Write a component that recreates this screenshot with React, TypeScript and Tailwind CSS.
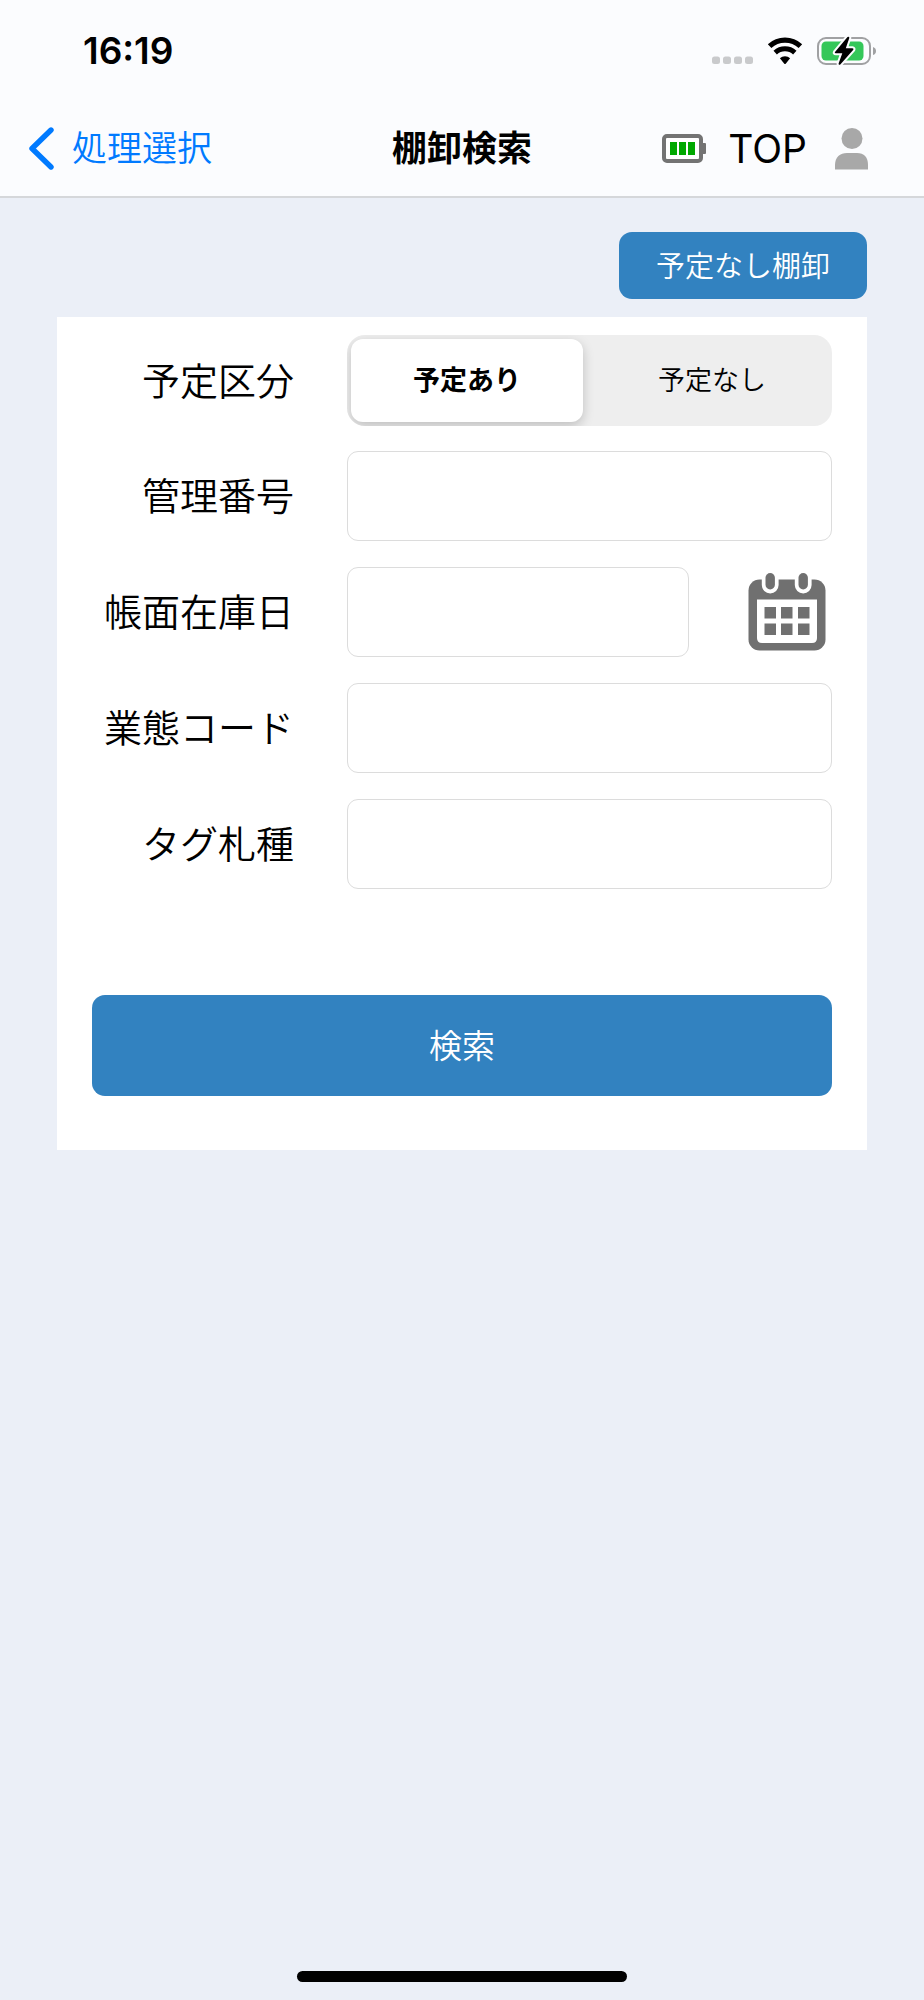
import { useState } from "react";

function StatusBar() {
  return (
    <div className="flex h-[101px] items-center justify-between pr-[47px] pl-[83px]">
      <time className="text-[37px] leading-none font-semibold">16:19</time>
      <div className="flex items-center gap-[14px]">
        <svg width="42" height="28" viewBox="0 0 42 28" fill="#c9cacc" aria-hidden="true">
          <rect x="1" y="19.5" width="8" height="7.5" rx="2.5" />
          <rect x="12" y="19.5" width="8" height="7.5" rx="2.5" />
          <rect x="23" y="19.5" width="8" height="7.5" rx="2.5" />
          <rect x="34" y="19.5" width="8" height="7.5" rx="2.5" />
        </svg>
        <svg width="36" height="28" viewBox="0 0 36 28" role="img" aria-label="Wi-Fi">
          <path d="M2.6 9.2 A22.5 22.5 0 0 1 33.4 9.2" fill="none" stroke="#000" strokeWidth="5.2" />
          <path d="M8.2 15.6 A14.5 14.5 0 0 1 27.8 15.6" fill="none" stroke="#000" strokeWidth="5" />
          <path d="M12.9 21.3 A7.2 7.2 0 0 1 23.1 21.3 L18.9 26.4 Q18 27.4 17.1 26.4 Z" fill="#000" />
        </svg>
        <svg width="60" height="30" viewBox="0 0 60 30" role="img" aria-label="充電中">
          <rect x="1" y="2" width="52" height="26" rx="8" fill="none" stroke="#a0a1a3" strokeWidth="2" />
          <rect x="4.5" y="5.5" width="42" height="19" rx="4.5" fill="#34c759" />
          <path d="M56 11 Q59 12 59 15 Q59 18 56 19 Z" fill="#a0a1a3" />
          <path
            d="M30.5 1 L18 16 Q17.2 17.3 18.8 17.3 L25.3 17.3 L21.6 27.5 Q21.5 29.6 23.3 28.4 L36.3 13.8 Q37 12.4 35.4 12.3 L28.8 12.3 L32.3 2 Q32.3 0 30.5 1 Z"
            fill="#000"
            stroke="#fbfcfe"
            strokeWidth="4"
            paintOrder="stroke"
          />
        </svg>
      </div>
    </div>
  );
}

function NavBar() {
  return (
    <nav className="grid h-[95px] grid-cols-[1fr_auto_1fr] items-center px-7">
      <a href="#menu" className="flex items-center gap-4 justify-self-start text-[35px] leading-none font-[350] text-[#007aff]">
        <svg width="28" height="44" viewBox="0 0 28 44" fill="none" aria-hidden="true">
          <path d="M23 3 L4 21.5 L23 40" stroke="#007aff" strokeWidth="5.4" strokeLinecap="round" strokeLinejoin="round" />
        </svg>
        処理選択
      </a>
      <h1 className="text-[35px] leading-none font-bold">棚卸検索</h1>
      <div className="mr-[27px] flex items-center justify-self-end">
        <svg width="44" height="29" viewBox="0 0 44 29" role="img" aria-label="電池残量">
          <rect x="2" y="2" width="37" height="25" rx="3" fill="#fff" stroke="#737373" strokeWidth="4" />
          <rect x="40" y="9" width="4" height="11" rx="1" fill="#737373" />
          <rect x="8" y="8" width="7" height="13" fill="#00a800" />
          <rect x="17" y="8" width="7" height="13" fill="#00a800" />
          <rect x="26" y="8" width="7" height="13" fill="#00a800" />
        </svg>
        <a href="#top" className="mr-7 ml-[22px] text-[39px] leading-none font-normal">TOP</a>
        <button type="button" aria-label="ユーザー">
          <svg width="34" height="42" viewBox="0 0 34 42" fill="#a8a8a8">
            <circle cx="17" cy="10.5" r="10.5" />
            <path d="M0 41.5 V37 C0 29 5 25 12 25 H22 C29 25 33 29 33 37 V41.5 Z" />
          </svg>
        </button>
      </div>
    </nav>
  );
}

function CalendarIcon() {
  return (
    <svg width="78" height="78" viewBox="0 0 78 78" aria-hidden="true">
      <rect x="0.5" y="6.5" width="77" height="71" rx="11" fill="#707070" />
      <path d="M9 26.5 H69 V65 Q69 70 64 70 H14 Q9 70 9 65 Z" fill="#fff" />
      <path d="M13.8 6 V12 A8.4 8.4 0 0 0 30.6 12 V6 Z M46.8 6 V12 A8.4 8.4 0 0 0 63.6 12 V6 Z" fill="#fff" />
      <rect x="17.5" y="0" width="9.4" height="16.5" rx="4.7" fill="#707070" />
      <rect x="50.5" y="0" width="9.4" height="16.5" rx="4.7" fill="#707070" />
      <path
        d="M16.5 34 h11.5 v11.5 h-11.5 Z M33 34 h11.5 v11.5 h-11.5 Z M50 34 h11.5 v11.5 h-11.5 Z M16.5 50.5 h11.5 v11.5 h-11.5 Z M33 50.5 h11.5 v11.5 h-11.5 Z M50 50.5 h11.5 v11.5 h-11.5 Z"
        fill="#707070"
      />
    </svg>
  );
}

const rowClass = "grid h-[90px] grid-cols-[202px_1fr] items-center gap-x-[53px]";
const labelClass = "text-right text-[38px] leading-none font-[350] whitespace-nowrap";
const inputClass =
  "h-[90px] w-full min-w-0 rounded-[11px] border border-[#dcdcdc] bg-white px-4 text-[32px] outline-none focus:border-[#3282c0]";

function TextRow({ id, label }: { id: string; label: string }) {
  return (
    <div className={rowClass}>
      <label htmlFor={id} className={labelClass}>{label}</label>
      <input id={id} type="text" className={inputClass} />
    </div>
  );
}

const planOptions = ["予定あり", "予定なし"];

export default function App() {
  const [plan, setPlan] = useState("予定あり");

  return (
    <div className="flex min-h-screen flex-col bg-[#ebeff7] font-[Inter,'Noto_Sans_CJK_JP',sans-serif] text-black">
      <header className="border-b-2 border-[#d5d7da] bg-[#fbfcfe]">
        <StatusBar />
        <NavBar />
      </header>

      <main className="flex flex-col px-[57px] pt-[34px]">
        <button
          type="button"
          className="mb-[18px] h-[67px] self-end rounded-[13px] bg-[#3282c0] px-[37px] pt-[2px] text-[29px] leading-none font-[350] text-white"
        >
          予定なし棚卸
        </button>

        <form className="flex flex-col gap-[26px] bg-white px-[35px] pt-[18px] pb-[54px]" onSubmit={(e) => e.preventDefault()}>
          <div className={rowClass}>
            <span id="plan-label" className={labelClass}>予定区分</span>
            <div
              role="radiogroup"
              aria-labelledby="plan-label"
              className="grid h-[91px] grid-cols-2 gap-[13px] overflow-hidden rounded-[18px] bg-[#eeeeee] p-1"
            >
              {planOptions.map((option) => (
                <label
                  key={option}
                  className="flex items-center justify-center rounded-xl text-[27px] leading-none font-[350] has-checked:bg-white has-checked:font-bold has-checked:shadow-[0_4px_12px_rgba(0,0,0,0.2)]"
                >
                  <input
                    type="radio"
                    name="plan"
                    value={option}
                    checked={plan === option}
                    onChange={() => setPlan(option)}
                    className="sr-only"
                  />
                  {option}
                </label>
              ))}
            </div>
          </div>

          <TextRow id="control-number" label="管理番号" />

          <div className={rowClass}>
            <label htmlFor="stock-date" className={labelClass}>帳面在庫日</label>
            <div className="flex items-center gap-[59px] pr-[6px]">
              <input id="stock-date" type="text" className={inputClass} />
              <button type="button" aria-label="日付を選択" className="shrink-0">
                <CalendarIcon />
              </button>
            </div>
          </div>

          <TextRow id="business-code" label="業態コード" />
          <TextRow id="tag-type" label="タグ札種" />

          <button
            type="submit"
            className="mt-20 h-[101px] rounded-[13px] bg-[#3282c0] pt-[2px] text-[33px] leading-none font-[350] text-white"
          >
            検索
          </button>
        </form>
      </main>

      <div className="mt-auto mb-[18px] h-[11px] w-[330px] self-center rounded-full bg-black" />
    </div>
  );
}
